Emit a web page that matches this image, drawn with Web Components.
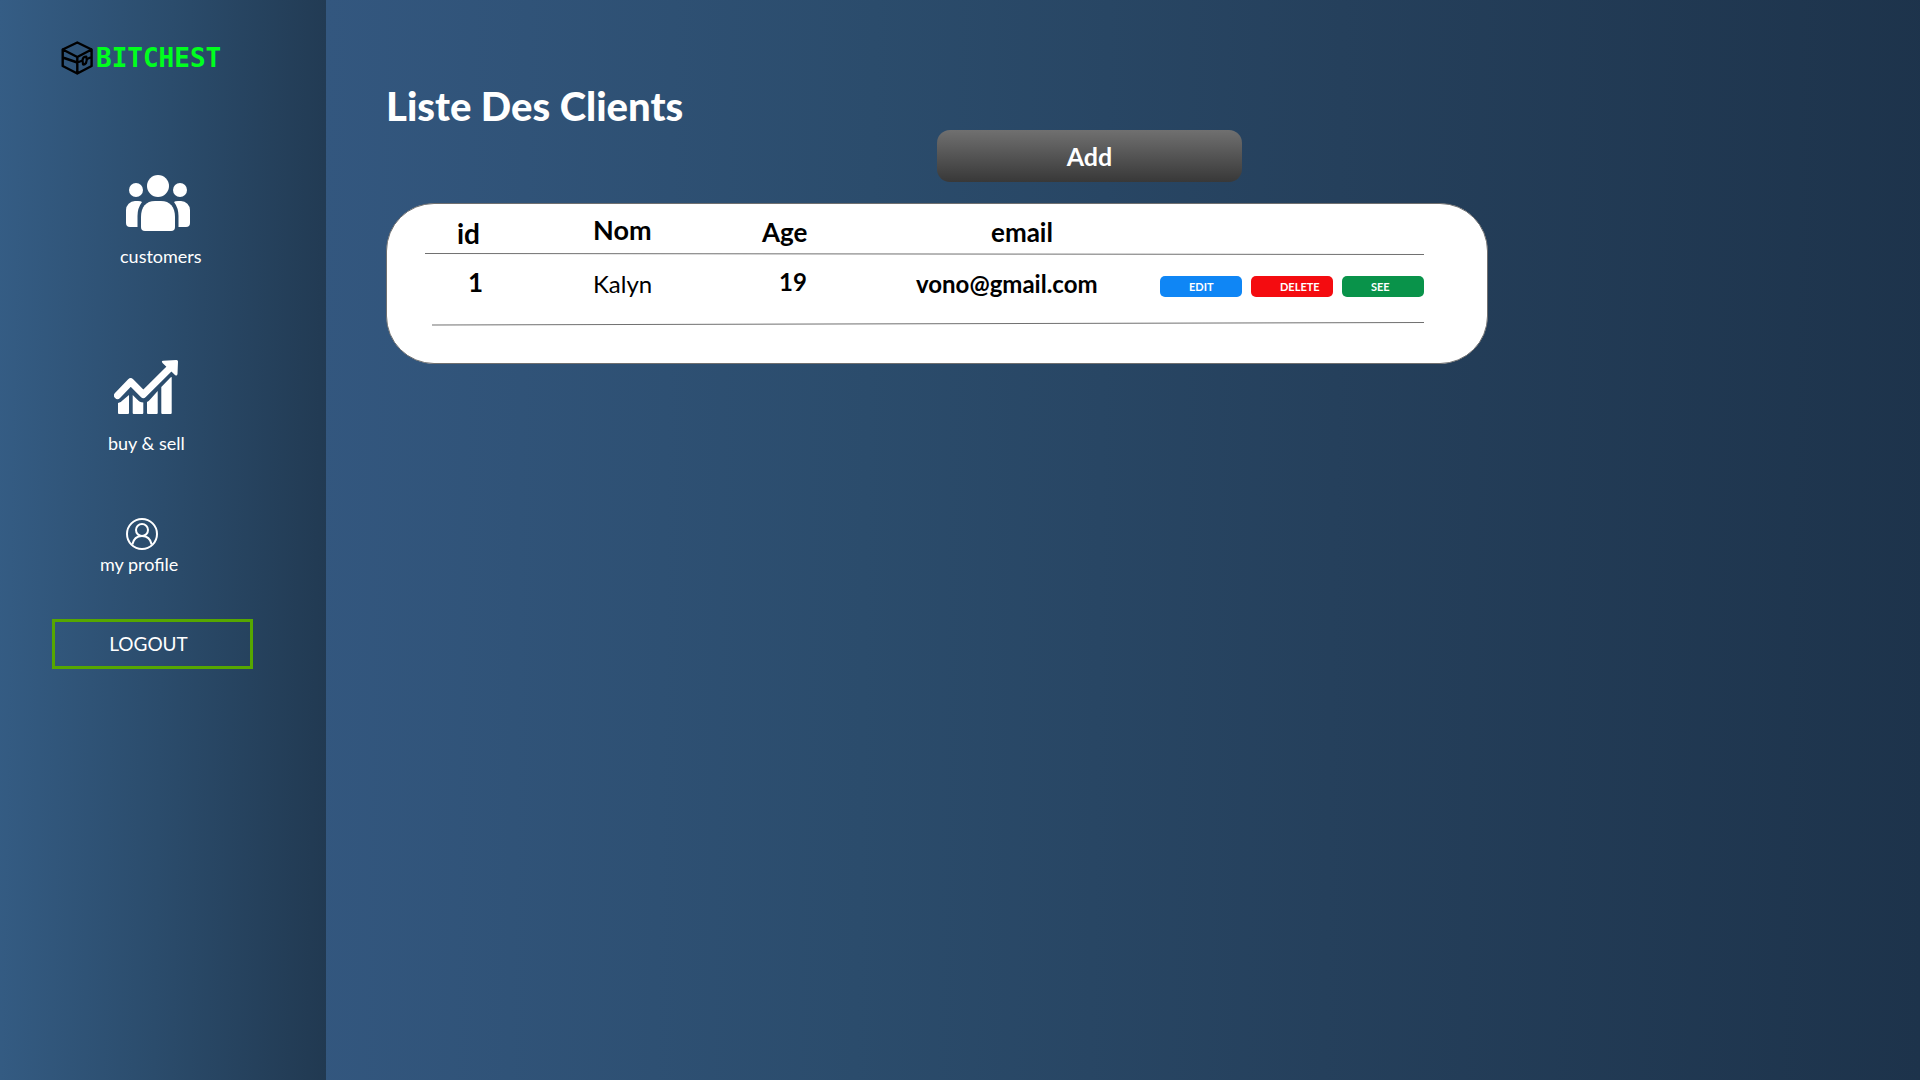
<!DOCTYPE html>
<html lang="fr">
<head>
<meta charset="utf-8">
<title>Bitchest</title>
<style>
html, body { margin: 0; }
body { font-family: Lato, "Liberation Sans", sans-serif; color: #fff; }
</style>
</head>
<body>
<bc-app></bc-app>

<template id="t-app">
<style>
:host { display: flex; min-height: 100vh; }
bc-clients { flex: 1; min-width: 0; }
</style>
<bc-sidebar></bc-sidebar>
<bc-clients></bc-clients>
</template>

<template id="t-logo">
<style>
:host { display: flex; align-items: center; gap: 3px; height: 34px; color: #00ff1e; font: bold 26px/34px "DejaVu Sans Mono", monospace; }
svg { width: 32px; height: 34px; }
</style>
<svg viewBox="0 0 32 34" fill="none" stroke="#000" stroke-width="2.400" stroke-linejoin="round" stroke-linecap="round" aria-hidden="true">
<path d="M16.300 1.500 30.600 8.500v16.500L16.300 32.500 1.700 25V8.500zM1.700 8.500l14.600 7.500L30.600 8.500M16.300 16v16.500M1.700 16.500l14.600 5 4-1.500M26 18l4.600-2"/>
<path d="M21.500 19q.5-3.500 3.800-3.500 1 3-.3 6.500-1.500 2-3 1.500z" stroke-width="2.200"/>
</svg>
<span><slot></slot></span>
</template>

<template id="t-item">
<style>
:host { display: block; }
a { display: inline-flex; flex-direction: column; align-items: center; gap: var(--gap, 13px); color: #fff; text-decoration: none; font-size: 18px; line-height: 24px; }
</style>
<a href="#"><slot name="icon"></slot><span><slot></slot></span></a>
</template>

<template id="t-sidebar">
<style>
:host { display: block; box-sizing: border-box; flex: none; width: 326px; padding: 41px 52px 0; background: linear-gradient(91deg, #355d85, #2b4c6c 50%, #213951); }
svg { display: block; }
bc-logo { margin-left: 9px; margin-bottom: 100px; }
.customers { margin-left: 68px; margin-bottom: 92px; }
.customers svg { margin-right: 6px; }
.trade { margin-left: 56px; margin-bottom: 63px; --gap: 16px; }
.profile { margin-left: 48px; margin-bottom: 43px; --gap: 2px; }
.profile svg { margin-left: 6px; }
button { display: block; box-sizing: border-box; width: 201px; height: 50px; padding: 0 8px 0 0; border: 3px solid #56a700; background: none; color: #fff; font: 19px/24px Lato, sans-serif; }
</style>
<bc-logo>BITCHEST</bc-logo>
<nav>
<bc-nav-item class="customers">
<svg slot="icon" width="64" height="56" viewBox="0 0 64 56" fill="#fff" aria-hidden="true">
<circle cx="32" cy="11" r="11"/><circle cx="10" cy="15" r="7"/><circle cx="54" cy="15" r="7"/>
<path d="M15 42C15 32 20 26 29 26h6c9 0 14 6 14 16v10a4 4 0 0 1-4 4H19a4 4 0 0 1-4-4z"/>
<path d="M9 26h3q3 0 4 1-4.500 6-4.500 14v11H4a4 4 0 0 1-4-4V35a9 9 0 0 1 9-9z"/>
<path d="M55 26h-3q-3 0-4 1 4.500 6 4.500 14v11H60a4 4 0 0 0 4-4V35a9 9 0 0 0-9-9z"/>
</svg>customers</bc-nav-item>
<bc-nav-item class="trade">
<svg slot="icon" width="64" height="55" viewBox="0 0 64 55" fill="#fff" aria-hidden="true">
<path d="M3.500 35.500 16.700 21.800 29.300 34.500 57 7" fill="none" stroke="#fff" stroke-width="7" stroke-linecap="round" stroke-linejoin="round"/>
<path d="M49 .800 62.500 0Q64 0 64 1.500L63.500 14q-.5 2.500-2.500 1L48.500 3q-1.500-2 .5-2.200z"/>
<path d="M4 43q3-.5 5-3l6-5v18q0 1-1 1H5q-1 0-1-1zM18.700 35l4 4q3 3.500 6.600 3.500V53q0 1-1 1h-8.600q-1 0-1-1zM33 42q2-1 4-3.500l6.700-7.500v22q0 1-1 1H34q-1 0-1-1zM47.300 27 56 18q1-1 1.700-1v36q0 1-1 1h-8.400q-1 0-1-1z"/>
</svg>buy &amp; sell</bc-nav-item>
<bc-nav-item class="profile">
<svg slot="icon" width="32" height="32" viewBox="0 0 32 32" fill="none" stroke="#fff" stroke-width="2" aria-hidden="true">
<circle cx="16" cy="16" r="15"/><circle cx="16" cy="12" r="6"/><path d="M6.300 26.500C7.500 21 11 18 16 18s8.500 3 9.700 8.500"/>
</svg>my profile</bc-nav-item>
</nav>
<button type="button">LOGOUT</button>
</template>

<template id="t-action">
<style>
:host { display: block; }
button { display: block; box-sizing: border-box; width: 82px; height: 21px; padding: 0 0 0 29px; border: 0; border-radius: 5px; background: var(--tone); color: #fff; font: bold 11px/20px Lato, sans-serif; text-align: left; }
</style>
<button type="button"><slot></slot></button>
</template>

<template id="t-table">
<style>
:host { display: block; box-sizing: border-box; padding: 0 63px 37px 38px; border: 1px solid #707070; border-radius: 48px; background: #fff; color: #000; }
table { width: 100%; border-collapse: collapse; table-layout: fixed; }
th, td { padding: 0; text-align: left; vertical-align: middle; font-size: 24px; line-height: 28px; font-weight: bold; white-space: nowrap; }
.head { height: 48px; }
.row { height: 66px; }
.row > td { vertical-align: top; padding-top: 14px; }
.rule td { line-height: 0; }
.rule svg { display: block; width: 100%; height: 4px; }
.id { font-size: 28px; padding: 10px 0 0 32px; }
.nom { font-size: 27px; padding-top: 4px; }
.age, .email { font-size: 26px; padding-top: 7px; }
.email { padding-left: 75px; }
.row > .num { padding-left: 43px; font-size: 26px; padding-top: 12px; }
.name { font-weight: normal; }
.row > .years { padding-left: 17px; padding-top: 12px; }
.row > .actions { padding-top: 20px; }
.group { display: flex; gap: 9px; }
</style>
<table>
<colgroup><col style="width:168px"><col style="width:169px"><col style="width:154px"><col style="width:244px"><col></colgroup>
<tr class="head"><th class="id">id</th><th class="nom">Nom</th><th class="age">Age</th><th class="email">email</th><td></td></tr>
<tr class="rule"><td colspan="5"><svg viewBox="0 0 999 4" preserveAspectRatio="none" stroke="#707070"><path d="M0 1.500 999 2.500"/></svg></td></tr>
<tr class="row"><td class="num">1</td><td class="name">Kalyn</td><td class="years">19</td><td>vono@gmail.com</td>
<td class="actions"><div class="group"><bc-action style="--tone:#0f86f5">EDIT</bc-action><bc-action style="--tone:#f40c10">DELETE</bc-action><bc-action style="--tone:#09934a">SEE</bc-action></div></td></tr>
<tr class="rule"><td colspan="5"><svg viewBox="0 0 999 4" preserveAspectRatio="none" stroke="#707070"><path d="M7 3 999 .500"/></svg></td></tr>
</table>
</template>

<template id="t-clients">
<style>
:host { display: block; box-sizing: border-box; padding: 83px 60px 60px; background: linear-gradient(91deg, #33577f, #2b4c6c 34%, #25405c 63%, #1d334b); }
.wrap { max-width: 1102px; }
h1 { margin: 0; font-size: 40px; line-height: 47px; font-weight: 900; }
.bar { display: flex; justify-content: flex-end; padding-right: 246px; margin-bottom: 21px; }
.bar button { width: 305px; height: 52px; padding: 0; border: 0; border-radius: 13px; background: linear-gradient(#707070, #383838); color: #fff; font: bold 25px/52px Lato, sans-serif; }
</style>
<main class="wrap">
<h1>Liste Des Clients</h1>
<div class="bar"><button type="button">Add</button></div>
<bc-client-table></bc-client-table>
</main>
</template>

<script>
const define = (name, id) => customElements.define(name, class extends HTMLElement {
  constructor() {
    super();
    this.attachShadow({ mode: "open" }).append(document.getElementById(id).content.cloneNode(true));
  }
});
define("bc-logo", "t-logo");
define("bc-nav-item", "t-item");
define("bc-action", "t-action");
define("bc-client-table", "t-table");
define("bc-sidebar", "t-sidebar");
define("bc-clients", "t-clients");
define("bc-app", "t-app");
</script>
</body>
</html>
